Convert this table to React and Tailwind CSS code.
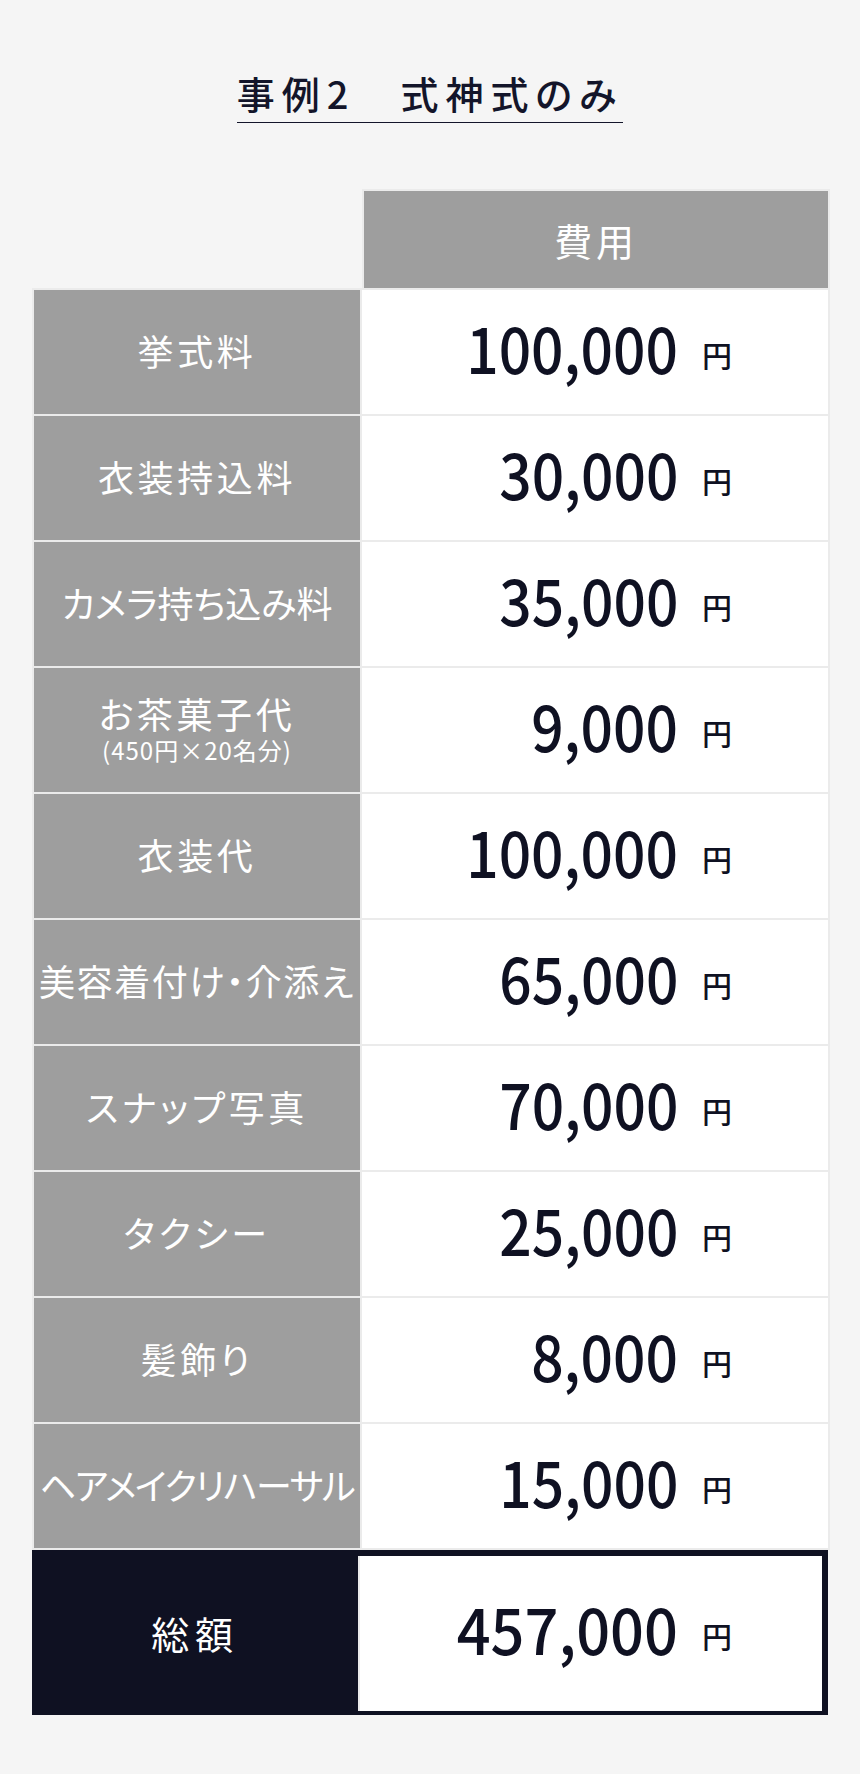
import React from "react";

const rows = [
  { label: "挙式料", value: "100,000" },
  { label: "衣装持込料", value: "30,000" },
  { label: "カメラ持ち込み料", value: "35,000", track: "tracking-[0px]" },
  { label: "お茶菓子代", sub: "(450円×20名分)", value: "9,000" },
  { label: "衣装代", value: "100,000" },
  { label: "美容着付け・介添え", value: "65,000", track: "tracking-[1.6px]" },
  { label: "スナップ写真", value: "70,000" },
  { label: "タクシー", value: "25,000" },
  { label: "髪飾り", value: "8,000" },
  { label: "ヘアメイクリハーサル", value: "15,000", track: "tracking-[-1.5px]" },
];

const jp = "font-['Noto_Sans_CJK_JP','Noto_Sans',sans-serif]";

function Amount({ value, pr, scale }) {
  return (
    <div className={`flex h-full items-center justify-end pb-[13px] ${pr}`}>
      <span className={`block origin-right ${scale} text-[64px] leading-none font-medium text-[#0f1122]`}>
        {value}
      </span>
      <span className="ml-[24px] mt-[16px] block text-[30px] leading-none font-medium text-[#0f1122]">
        円
      </span>
    </div>
  );
}

export default function App() {
  return (
    <div className={`min-h-[1774px] w-full bg-[#f5f5f5] px-[32px] pt-[70px] ${jp}`}>
      <div className="flex justify-center">
        <h1 className="border-b border-[#13152a] pb-[6px] text-[38px] leading-[46px] font-medium tracking-[7px] text-[#13152a] [font-feature-settings:'palt']">
          事例2　式神式のみ
        </h1>
      </div>

      <div className="mt-[66px] w-[798px]">
        <div className="ml-[330px] flex h-[99px] w-[468px] items-center justify-center border-2 border-b-0 border-[#ebebeb] bg-[#9e9e9e]">
          <span className="text-[38px] leading-none tracking-[0.1em] text-white [font-feature-settings:'palt']">
            費用
          </span>
        </div>

        <div className="grid grid-cols-[326px_466px] gap-[2px] bg-[#ebebeb] p-[2px]">
          {rows.map((r) => (
            <React.Fragment key={r.label}>
              <div className="flex h-[124px] flex-col items-center justify-center bg-[#9e9e9e] pb-[4px] text-white [font-feature-settings:'palt']">
                <span
                  className={`text-[36px] leading-[36px] whitespace-nowrap ${
                    r.track || "tracking-[0.1em]"
                  }`}
                >
                  {r.label}
                </span>
                {r.sub && (
                  <span className="mt-[7px] text-[24px] leading-[24px] tracking-[1px] whitespace-nowrap">
                    {r.sub}
                  </span>
                )}
              </div>
              <div className="h-[124px] bg-white">
                <Amount value={r.value} pr="pr-[96px]" scale="scale-x-[0.89]" />
              </div>
            </React.Fragment>
          ))}
        </div>

        <div className="flex h-[165px] w-[796px] bg-[#0f1122]">
          <div className="flex w-[326px] items-center justify-center text-white">
            <span className="text-[38px] leading-none tracking-[0.15em] [font-feature-settings:'palt']">
              総額
            </span>
          </div>
          <div className="mt-[6px] mb-[4px] w-[464px] border-l-2 border-[#ebebeb] bg-white">
            <Amount value="457,000" pr="pr-[90px]" scale="scale-x-[0.93]" />
          </div>
        </div>
      </div>
    </div>
  );
}
